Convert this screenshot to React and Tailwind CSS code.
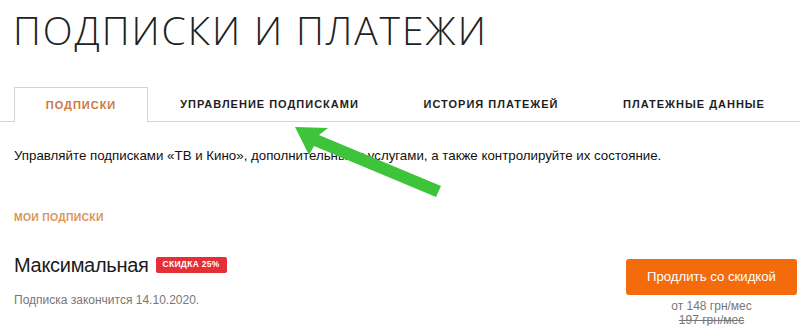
import React from 'react';

const tabs = [
  { label: 'ПОДПИСКИ', width: 'w-[134px]', active: true },
  { label: 'УПРАВЛЕНИЕ ПОДПИСКАМИ', width: 'w-[243px]' },
  { label: 'ИСТОРИЯ ПЛАТЕЖЕЙ', width: 'w-[200px]' },
  { label: 'ПЛАТЕЖНЫЕ ДАННЫЕ', width: 'w-[206px]' },
];

const App = () => {
  return (
    <div className="relative w-[800px] h-[326px] overflow-hidden bg-white font-['Liberation_Sans',sans-serif] text-[#1a1a1a]">
      {/* Title */}
      <h1 className="pl-[13px] pt-[8px] h-[80px] text-[39px] leading-[44px] font-light tracking-[1.9px] font-['Open_Sans',sans-serif] text-[#222]">
        ПОДПИСКИ И ПЛАТЕЖИ
      </h1>

      {/* Tabs */}
      <div className="flex h-[42px] pt-[7px]">
        <div className="w-[14px] border-b border-[#d4d4d4]" />
        {tabs.map((tab) => (
          <div
            key={tab.label}
            className={
              tab.active
                ? `${tab.width} flex items-center justify-center border border-b-0 border-[#d4d4d4] text-[11px] font-bold tracking-[1px] text-[#c97a3f]`
                : `${tab.width} flex items-center justify-center border-b border-[#d4d4d4] text-[11px] font-bold tracking-[1px] text-[#1e1e1e]`
            }
          >
            {tab.label}
          </div>
        ))}
        <div className="flex-1 border-b border-[#d4d4d4]" />
      </div>

      {/* Description */}
      <p className="pl-[14px] pt-[26px] text-[13.3px] leading-[16px] text-[#111]">
        Управляйте подписками «ТВ и Кино», дополнительными услугами, а также контролируйте их состояние.
      </p>

      {/* My subscriptions */}
      <div className="pl-[14px] pt-[46px] text-[10.4px] font-bold tracking-[0.3px] text-[#d9955c]">
        МОИ ПОДПИСКИ
      </div>

      <div className="flex justify-between pl-[14px] pr-[3px] pt-[27px]">
        <div>
          <div className="flex items-center gap-[7px]">
            <span className="text-[20px] leading-[24px] tracking-[-0.3px]">Максимальная</span>
            <span className="h-[16px] px-[7px] flex items-center rounded-[2px] bg-[#e42f37] text-white text-[8.5px] font-bold tracking-[0.3px]">
              СКИДКА 25%
            </span>
          </div>
          <div className="pt-[14px] text-[12px] text-[#777]">Подписка закончится 14.10.2020.</div>
        </div>
        <div className="flex flex-col items-center w-[171px] mt-[6px]">
          <button className="w-full h-[36px] rounded-[3px] bg-[#f46b0c] text-white text-[13.2px]">
            Продлить со скидкой
          </button>
          <div className="pt-[4px] text-[12px] leading-[14px] text-[#777]">от 148 грн/мес</div>
          <div className="text-[12px] leading-[14px] text-[#777] line-through">197 грн/мес</div>
        </div>
      </div>

      {/* Annotation arrow */}
      <svg className="absolute left-0 top-0 pointer-events-none" width="800" height="326" viewBox="0 0 800 326">
        <polygon
          points="295,127 328,128 319,135 441,186 436,197 314,146 309,155"
          fill="#3ec43a"
        />
      </svg>
    </div>
  );
};

export default App;
